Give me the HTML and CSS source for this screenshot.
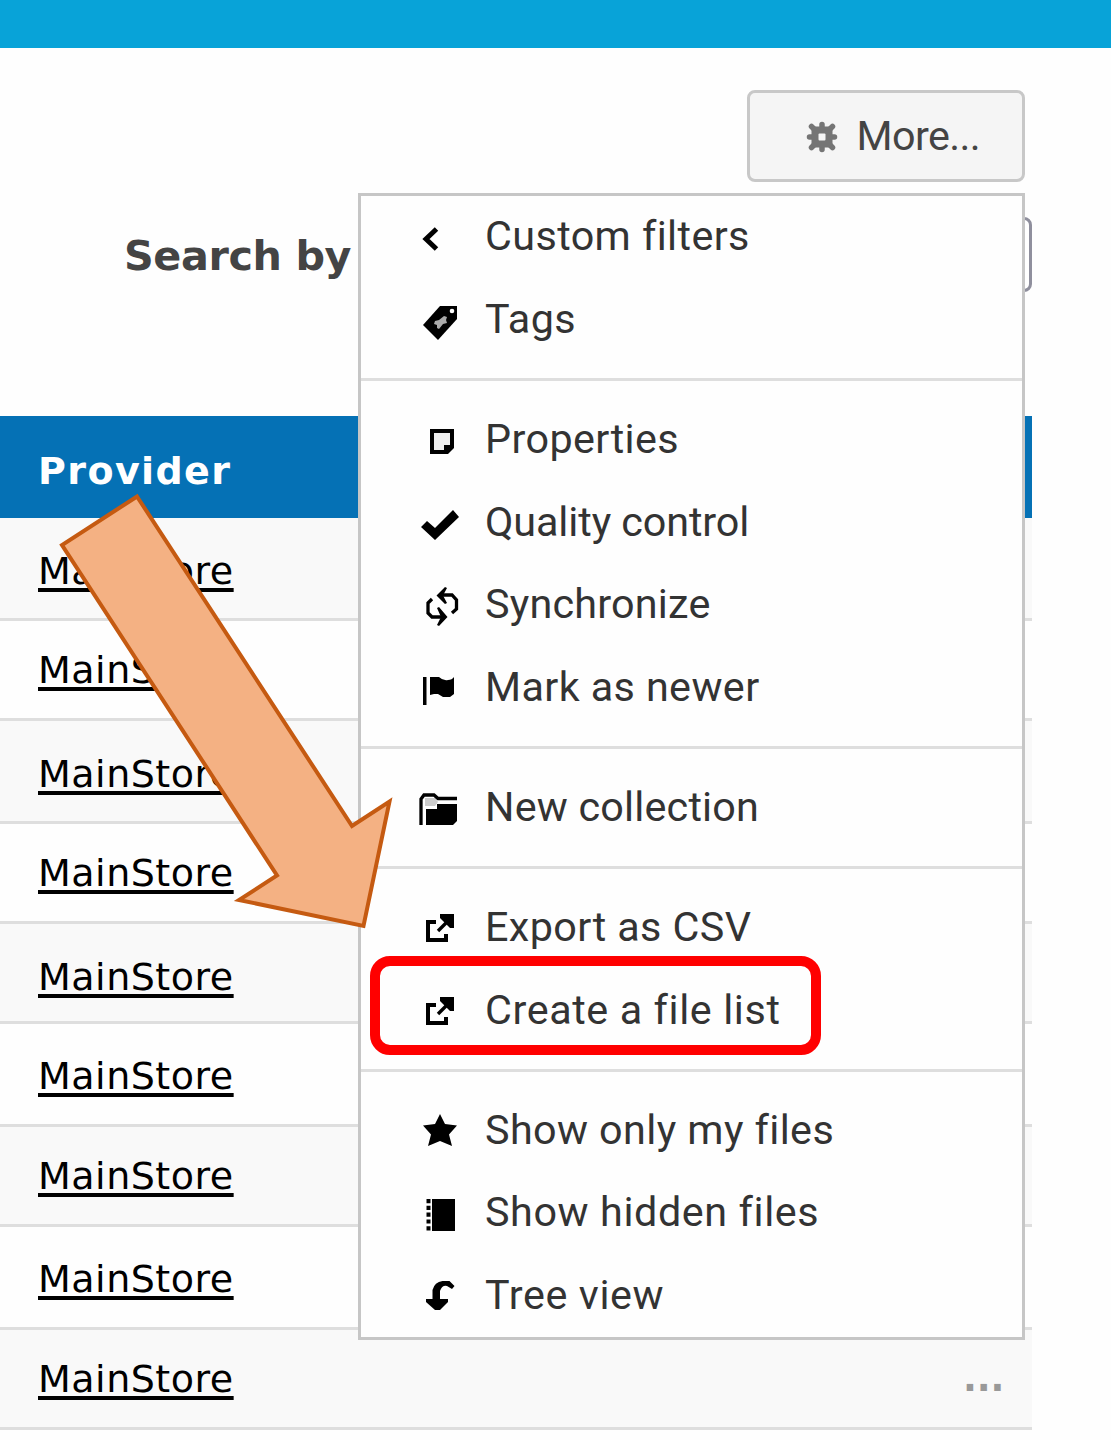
FILE: index.html
```html
<!DOCTYPE html>
<html lang="en">
<head>
<meta charset="utf-8">
<title>Files</title>
<link rel="stylesheet" href="styles.css">
</head>
<body>
<header class="topbar"></header>
<div class="toolbar">
  <button class="more" type="button">
    <svg class="gear" viewBox="0 0 32 32"><g stroke="#757575" stroke-width="5.500" stroke-linecap="round"><path d="M16 3.500v25M3.500 16h25M5.500 5.500l21 21M26.500 5.500l-21 21"/></g><rect x="5.500" y="5.500" width="21" height="21" rx="4" fill="#757575"/><rect x="12.500" y="12.500" width="7" height="7" rx="1" fill="#f5f5f5"/></svg>
    <span>More...</span>
  </button>
  <ul class="menu">
    <li><svg viewBox="0 0 48 48"><path class="line bold" d="M20.500 16 10 26l10.500 10"/></svg><span>Custom filters</span></li>
    <li><svg viewBox="0 0 48 48"><path d="M24 10h17v13L22 44 7 29z"/><circle cx="36" cy="15" r="2.300" fill="#fff"/><path fill="#aaa" d="M19 25l4-1 5-4 3 1-1 3 1 3-4 1-4 5-2-1 0-3-3-1z"/></svg><span>Tags</span></li>
    <li class="sep"></li>
    <li><svg viewBox="0 0 48 48"><path fill="#eee" d="M16 15h20v14l-8 7H16z"/><path class="line" d="M16 15h20v15l-6 6H16z"/><path d="M28 38v-9h10v3l-6 6z"/></svg><span>Properties</span></li>
    <li><svg viewBox="0 0 48 48"><path d="M5 28l6-6 8 7 18-18 6 7-24 23z"/></svg><span class="tight">Quality control</span></li>
    <li><svg viewBox="0 0 48 48"><path class="line thin" d="M16 18l-4 4v10l4 4h13M36 32l4.500-4v-9L36 14H23"/><path d="M21 27l2-1 8.500 10L23 45l-2-1 4-8zM31 7l-2-1-8.500 8.500L29 23l2-1-4-7.500z"/></svg><span class="snug">Synchronize</span></li>
    <li><svg viewBox="0 0 48 48"><path d="M7 13h3.500v28H7zM14 13h9q4 4 9 3 4 0 6-3v17l-4 3h-7l-5-3-4 0-4 1z"/></svg><span>Mark as newer</span></li>
    <li class="sep"></li>
    <li><svg viewBox="0 0 48 48"><path fill="#ccc" d="M9 14h10l3 4-3 4H9z"/><path class="line thin" d="M5 41V15l3-4h10l4 3.500h19"/><path d="M21 20h20v17l-4 4H10V25h11z"/></svg><span class="snug">New collection</span></li>
    <li class="sep"></li>
    <li><svg viewBox="0 0 48 48"><path class="line" d="M20 18h-8v18h18v-6"/><path class="line thin" d="M22 27l11-11"/><path d="M24 10h14v14h-4l-4-4-6-6z"/></svg><span>Export as CSV</span></li>
    <li class="marked"><svg viewBox="0 0 48 48"><path class="line" d="M20 18h-8v18h18v-6"/><path class="line thin" d="M22 27l11-11"/><path d="M24 10h14v14h-4l-4-4-6-6z"/></svg><span class="loose">Create a file list</span></li>
    <li class="sep"></li>
    <li><svg viewBox="0 0 48 48"><path d="M24 7l5 10 12 1.500-8 9L36 39l-12-5-12 5 3-11.500-8-9L19 17z"/></svg><span>Show only my files</span></li>
    <li><svg viewBox="0 0 48 48"><path d="M16 10h23v32H16z"/><path class="line" stroke-dasharray="4.200 2.600" d="M12.500 10v32"/></svg><span class="loose">Show hidden files</span></li>
    <li><svg viewBox="0 0 48 48"><path d="M10 27h6.500v-9q2-8 10-9h7l5 5-2.500 3-5-3q-5-1-7 5v8H32v3l-8 8h-5l-9-8z"/></svg><span class="loose">Tree view</span></li>
  </ul>
</div>
<div class="search"><label for="q">Search by</label><input id="q" type="text"></div>
<div class="table">
  <div class="head">Provider</div>
  <div class="row tall low"><a>MainStore</a></div>
  <div class="row"><a>MainStore</a></div>
  <div class="row tall low"><a>MainStore</a></div>
  <div class="row"><a>MainStore</a></div>
  <div class="row low"><a>MainStore</a></div>
  <div class="row tall low"><a>MainStore</a></div>
  <div class="row"><a>MainStore</a></div>
  <div class="row tall low"><a>MainStore</a></div>
  <div class="row"><a>MainStore</a><span class="dots">...</span></div>
</div>
<svg class="pointer" viewBox="0 0 350 450"><path d="M87 16.500 302 346l37.500-24.500L313.500 446l-124.500-26 38-24.500L12 65z"/></svg>
</body>
</html>
```
FILE: styles.css
```css
*, *::after { box-sizing: border-box; }
body {
  margin: 0;
  position: relative;
  height: 1440px;
  overflow: hidden;
  background: #fefefe;
  font-family: "DejaVu Sans", sans-serif;
}
.topbar { height: 47.5px; background: #08a3d8; }
.toolbar {
  position: relative;
  display: flex;
  justify-content: flex-end;
  height: 169.5px;
  padding: 42.5px 86.5px 0 0;
}
.more {
  display: flex;
  align-items: center;
  gap: 19px;
  width: 278px;
  height: 92px;
  padding: 0 0 0 56px;
  border: 3px solid #c8c8c8;
  border-radius: 8px;
  background: #f5f5f5;
  color: #444;
  font: 41.3px Roboto, sans-serif;
  letter-spacing: -0.6px;
}
.gear { width: 32px; height: 32px; margin-top: 2px; }
.menu {
  position: absolute;
  z-index: 2;
  top: 145.5px;
  left: 358px;
  width: 667px;
  margin: 0;
  padding: 0;
  border: 3px solid #c6c6c6;
  background: #fefefe;
  list-style: none;
  color: #333;
  font: 41.3px Roboto, sans-serif;
  letter-spacing: 0.4px;
}
.menu li {
  position: relative;
  display: flex;
  align-items: center;
  gap: 21px;
  height: 82.5px;
  padding-left: 55px;
}
.menu span { margin-top: -2px; white-space: nowrap; }
.menu .tight { letter-spacing: -0.1px; }
.menu .snug { letter-spacing: 0.2px; }
.menu .loose { letter-spacing: 0.6px; }
.menu .sep {
  height: 3px;
  margin: 17.4px 0;
  background: #dedede;
}
.menu svg { width: 48px; height: 48px; }
.line { fill: none; stroke: #000; stroke-width: 4px; }
.bold { stroke-width: 5px; }
.thin { stroke-width: 3.3px; }
.marked::after {
  content: "";
  position: absolute;
  z-index: 1;
  left: 9px;
  top: -13px;
  width: 451px;
  height: 99px;
  border: 10px solid #f00;
  border-radius: 20px;
}
.search {
  display: flex;
  justify-content: space-between;
  width: 1031.5px;
  height: 199px;
  padding-left: 124px;
}
.search label {
  padding-top: 15px;
  color: #444;
  font-size: 41.3px;
  font-weight: bold;
  line-height: 48px;
  letter-spacing: -0.4px;
}
.search input {
  width: 500px;
  height: 75px;
  border: 3px solid #8f8f9d;
  border-radius: 8px;
  background: #fff;
}
.table { width: 1031.5px; font-size: 38px; line-height: 44px; }
.head {
  height: 102px;
  padding: 33px 38px;
  background: #0571b5;
  color: #fff;
  font-weight: bold;
  letter-spacing: 1.4px;
}
.row {
  display: flex;
  justify-content: space-between;
  height: 99.75px;
  padding: 27px 27px 0 38px;
  border-bottom: 3px solid #dedede;
}
.row:nth-child(even) { background: #f9f9f9; }
.tall { height: 103.3px; }
.low { padding-top: 30.5px; }
.row a {
  color: #000;
  letter-spacing: 0.5px;
  text-decoration: underline;
  text-decoration-thickness: 3.5px;
  text-underline-offset: 4px;
  text-decoration-skip-ink: none;
}
.dots { color: #999; font-size: 36.5px; font-weight: bold; }
.pointer {
  position: absolute;
  z-index: 3;
  left: 50px;
  top: 480px;
  width: 350px;
  height: 450px;
  fill: #f4b183;
  stroke: #c55a11;
  stroke-width: 4px;
}
```
